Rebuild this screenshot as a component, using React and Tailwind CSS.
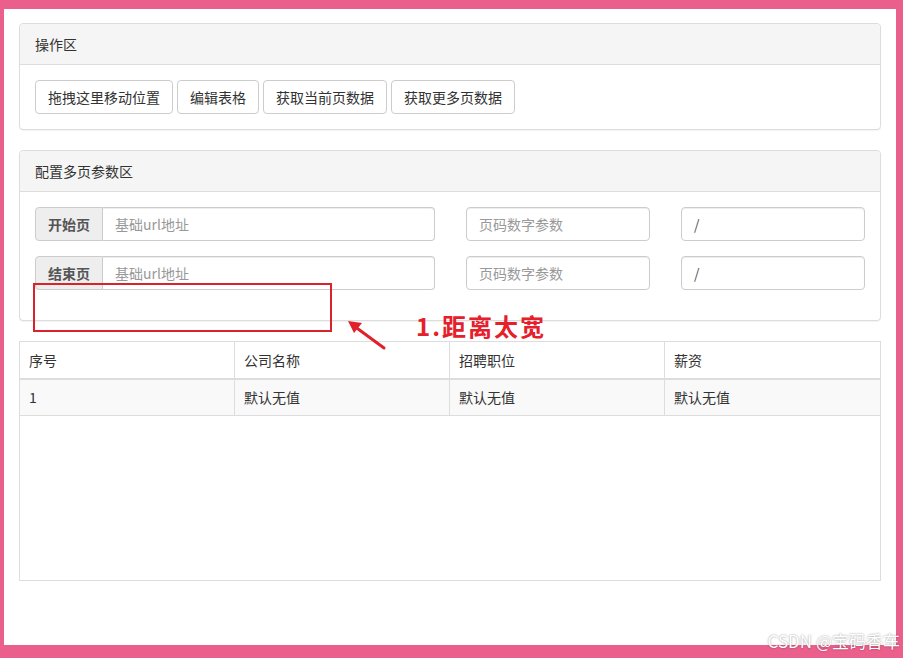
import React from "react";

const font = { fontFamily: '"Noto Sans CJK SC", "Noto Sans", sans-serif' };

function Panel({ title, children }) {
  return (
    <div className="border border-[#ddd] rounded-[4px] bg-white shadow-[0_1px_1px_rgba(0,0,0,0.05)]">
      <div className="bg-[#f5f5f5] border-b border-[#ddd] rounded-t-[4px] px-[15px] py-[10px] text-[14px] leading-[20px] text-[#333]">
        {title}
      </div>
      <div className="p-[15px]">{children}</div>
    </div>
  );
}

function Btn({ children }) {
  return (
    <button className="h-[34px] px-[12px] border border-[#ccc] rounded-[4px] bg-white text-[14px] leading-[20px] text-[#333]">
      {children}
    </button>
  );
}

function Row({ label }) {
  return (
    <div className="flex gap-[31px] mb-[15px]">
      <div className="flex w-[400px] h-[34px]">
        <span className="flex items-center px-[12px] bg-[#eee] border border-[#ccc] rounded-l-[4px] text-[14px] font-bold text-[#555]">
          {label}
        </span>
        <div className="flex-1 flex items-center px-[12px] border border-l-0 border-[#ccc] rounded-r-[4px] text-[14px] text-[#999] shadow-[inset_0_1px_1px_rgba(0,0,0,0.075)]">
          基础url地址
        </div>
      </div>
      <div className="w-[184px] h-[34px] flex items-center px-[12px] border border-[#ccc] rounded-[4px] text-[14px] text-[#999] shadow-[inset_0_1px_1px_rgba(0,0,0,0.075)]">
        页码数字参数
      </div>
      <div className="w-[184px] h-[34px] flex items-center px-[12px] border border-[#ccc] rounded-[4px] text-[14px] text-[#555] shadow-[inset_0_1px_1px_rgba(0,0,0,0.075)]">
        /
      </div>
    </div>
  );
}

export default function App() {
  const heads = ["序号", "公司名称", "招聘职位", "薪资"];
  const vals = ["1", "默认无值", "默认无值", "默认无值"];
  return (
    <div
      className="relative w-[903px] h-[658px] bg-[#eb5f8c] pt-[9px] pl-[4px] pr-[7px] pb-[13px]"
      style={font}
    >
      <div className="h-full bg-white pt-[14px] px-[15px]">
        <Panel title="操作区">
          <div className="flex gap-[4px]">
            <Btn>拖拽这里移动位置</Btn>
            <Btn>编辑表格</Btn>
            <Btn>获取当前页数据</Btn>
            <Btn>获取更多页数据</Btn>
          </div>
        </Panel>
        <div className="h-[20px]" />
        <Panel title="配置多页参数区">
          <Row label="开始页" />
          <Row label="结束页" />
        </Panel>
        <div className="h-[20px]" />
        <div className="h-[240px] border border-[#ddd]">
          <div className="grid grid-cols-4 border-b-2 border-[#ddd]">
            {heads.map((h, i) => (
              <div
                key={i}
                className={`h-[36px] flex items-center px-[9px] text-[14px] text-[#333] ${i < 3 ? "border-r border-[#ddd]" : ""}`}
              >
                {h}
              </div>
            ))}
          </div>
          <div className="grid grid-cols-4 bg-[#f9f9f9] border-b border-[#ddd]">
            {vals.map((v, i) => (
              <div
                key={i}
                className={`h-[35px] flex items-center px-[9px] text-[14px] text-[#333] ${i < 3 ? "border-r border-[#ddd]" : ""}`}
              >
                {v}
              </div>
            ))}
          </div>
        </div>
      </div>

      {/* annotation overlays */}
      <div className="absolute left-[33px] top-[283px] w-[299px] h-[49px] border-2 border-[#d8232d]" />
      <svg className="absolute left-[340px] top-[314px]" width="50" height="40" viewBox="0 0 50 40">
        <line x1="44" y1="34" x2="14" y2="12" stroke="#e0202b" strokeWidth="3" strokeLinecap="round" />
        <polygon points="8,7 22,9 14,19" fill="#e0202b" />
      </svg>
      <div className="absolute left-[416px] top-[310px] text-[24px] leading-[32px] font-bold text-[#e5202b] tracking-[2px]">
        1.距离太宽
      </div>
      <div className="absolute right-[3px] top-[629px] text-[17px] leading-[24px] text-white [text-shadow:0_0_2px_rgba(0,0,0,0.45)]">
        CSDN @宝码香车
      </div>
    </div>
  );
}
